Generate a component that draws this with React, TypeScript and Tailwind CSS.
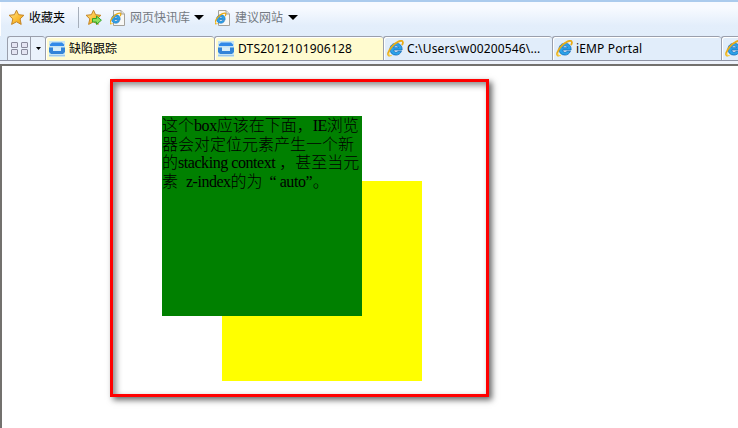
import type { ReactNode } from 'react';

function Star({ arrow = false }: { arrow?: boolean }) {
  return (
    <svg width="17" height="17" viewBox="0 0 17 17" className="shrink-0">
      <defs>
        <linearGradient id="gold" x1="0" y1="0" x2="1" y2="1">
          <stop offset="0" stopColor="#ffe9a0" />
          <stop offset="0.5" stopColor="#fcc23c" />
          <stop offset="1" stopColor="#f09a10" />
        </linearGradient>
      </defs>
      <path d="M8.5 1.2 L10.6 5.7 L15.9 6.3 L12.1 9.9 L13.2 15.4 L8.5 12.8 L3.6 15.4 L4.8 9.9 L1.1 6.3 L6.4 5.7 Z" fill="url(#gold)" stroke="#c48526" strokeWidth="1" strokeLinejoin="round" />
      {arrow && <path d="M7.5 9.5 H11.5 V7 L16.4 11.2 L11.5 15.4 V13 H7.5 Z" fill="#8ee05c" stroke="#35a32b" strokeWidth="1" />}
    </svg>
  );
}

function ELogo() {
  return (
    <>
      <path d="M13.6 10.6 C12.5 13 10.7 14.2 8.4 14.2 C4.9 14.2 2.8 11.8 2.8 8.7 C2.8 5.5 5.1 3.1 8.6 3.1 C12.5 3.1 14.5 5.9 14.2 9.4 H6.3 C6.5 11 7.4 11.6 8.6 11.6 C9.4 11.6 10 11.2 10.3 10.6 Z M6.4 7.3 H10.8 C10.5 6.1 9.8 5.5 8.6 5.5 C7.4 5.5 6.6 6.1 6.4 7.3 Z" fill="#2ba3ea" fillRule="evenodd" stroke="#1266b4" strokeWidth=".7" />
      <path d="M2.5 15 C-.3 14.6 1.2 10.2 4.4 6.4 C8.3 2 13.7 -.6 14.8 1.5 C15.3 2.4 14.7 3.8 14.1 4.8" fill="none" stroke="#e9ac18" strokeWidth="1.7" />
      <path d="M4.4 14.4 C2.3 15.3 1.3 14.4 1.8 12.5" fill="none" stroke="#f8cf42" strokeWidth="1.2" />
    </>
  );
}

function IeIcon() {
  return <svg width="17" height="17" viewBox="0 0 16 16" className="shrink-0"><ELogo /></svg>;
}

function PageIcon() {
  return (
    <svg width="16" height="16" viewBox="0 0 16 16" className="shrink-0">
      <path d="M3.5 .5 H11 L14.5 4 V15.5 H3.5 Z" fill="#f8f8f6" stroke="#a5a29b" />
      <path d="M11 .5 V4 H14.5" fill="#e2e1db" stroke="#a5a29b" />
      <g transform="translate(-.6 2.5) scale(.76)"><ELogo /></g>
    </svg>
  );
}

function TrackerIcon() {
  return (
    <svg width="16" height="16" viewBox="0 0 16 16" className="shrink-0">
      <rect width="16" height="16" fill="#c9e5f3" />
      <rect y="14" width="16" height="1" fill="#9cc8e8" />
      <path d="M3 1.5 H13 L15 3.5 V5 H1 V3.5 Z" fill="#3189e8" />
      <path d="M0 6.5 H4 V10 H12 V6.5 H16 V11 L14 13 H2 L0 11 Z" fill="#3384d8" />
      <rect x="4" y="6.5" width="8" height="3.5" fill="#d9eef8" />
    </svg>
  );
}

function Caret({ className, small = false }: { className?: string; small?: boolean }) {
  return small ? (
    <svg width="5" height="3" viewBox="0 0 5 3" className={className}><path d="M0 0 H5 L2.5 3 Z" fill="#000" /></svg>
  ) : (
    <svg width="10" height="5" viewBox="0 0 10 5" className={className}><path d="M0 0 H10 L5 5 Z" fill="#000" /></svg>
  );
}

function Tab({ icon, yellow = false, children }: { icon: ReactNode; yellow?: boolean; children?: ReactNode }) {
  return (
    <div className={`flex h-6 w-[169px] shrink-0 items-center overflow-hidden rounded-t-[3px] border-t border-l border-[#9a9fac] pl-[3px] whitespace-nowrap shadow-[inset_1px_1px_0_#fff] ${yellow ? 'bg-[#fffbcf]' : 'bg-[#e1edfa]'}`}>
      {icon}
      {children}
    </div>
  );
}

export default function App() {
  return (
    <div className="h-[428px] w-[738px] overflow-hidden bg-white text-black">
      <div className="h-[61px] border-t-2 border-[#abcbed] bg-linear-to-b from-[#f7faff] from-10% via-[#e3eefb] via-40% to-[#dfecfa] font-['Noto_Sans','Noto_Sans_CJK_SC',sans-serif] text-[12px] leading-4">
        <div className="flex h-[34px] items-center border-l border-white pb-[3px] pl-[7px] font-['Noto_Sans_CJK_SC',sans-serif] whitespace-nowrap">
          <Star />
          <span className="ml-[4px] w-[36px] pb-[2px]">收藏夹</span>
          <div className="ml-[13px] h-[21px] w-px bg-[#a6afbb]" />
          <span className="ml-[6px] flex"><Star arrow /></span>
          <span className="ml-[8px] flex"><PageIcon /></span>
          <span className="ml-[4px] w-[60px] pb-[2px] text-[#747a82]">网页快讯库</span>
          <Caret className="ml-[4px]" />
          <span className="ml-[11px] flex"><PageIcon /></span>
          <span className="ml-[4px] w-[48px] pb-[2px] text-[#747a82]">建议网站</span>
          <Caret className="ml-[5px]" />
        </div>
        <div className="flex h-[25px] border-b border-[#8f94a5] pl-[7px]">
          <div className="flex h-6 w-[38px] shrink-0 rounded-t-[3px] border-t border-l border-[#9a9fac] bg-[#eaf2fc]">
            <div className="grid w-[22px] grid-cols-2 content-center gap-x-px gap-y-px pl-[3px]">
              {[0, 1, 2, 3].map((i) => <div key={i} className="h-[6px] w-[7px] rounded-[1px] border border-[#898b9c] bg-[#e3e4f2]" />)}
            </div>
            <div className="flex flex-1 items-center justify-center border-l border-[#9a9fac]"><Caret small /></div>
          </div>
          <Tab yellow icon={<TrackerIcon />}><span className="ml-1">缺陷跟踪</span></Tab>
          <Tab yellow icon={<TrackerIcon />}><span className="ml-[4px] tracking-[0.2px]">DTS2012101906128</span></Tab>
          <Tab icon={<IeIcon />}><span className="ml-[3px] tracking-[0.15px]">C:\Users\w00200546\...</span></Tab>
          <Tab icon={<IeIcon />}><span className="ml-[3px] tracking-[0.15px]">iEMP Portal</span></Tab>
          <Tab icon={<IeIcon />} />
        </div>
      </div>
      <div className="h-[3px] bg-[#edf2fb]" />
      <div className="h-[364px] border-t-2 border-l-2 border-[#73716e] pt-[13px] pl-[108px]">
        <div className="h-[318px] w-[379px] border-[3px] border-[#ff0000] pt-[34px] pl-[49px] shadow-[3px_3px_6px_#666,inset_3px_3px_6px_#888]">
          <div className="relative z-10 h-[200px] w-[200px] bg-[#008000] pt-[1px] font-['Liberation_Serif','Noto_Sans_CJK_SC',serif] text-[16px] leading-[18.6px] font-light whitespace-pre">
            <div>这个<span className="tracking-[-0.4px]">box</span>应该在下面，<span className="tracking-[-0.6px]">IE</span>浏览</div>
            <div>器会对定位元素产生一个新</div>
            <div>的<span className="tracking-[-0.45px]">stacking context</span> ，甚至当元</div>
            <div>素  <span className="tracking-[-0.5px]">z-index</span>的为<span className="ml-[7px] mr-[3px]">“</span><span className="tracking-[-0.4px]">auto</span>”。</div>
          </div>
          <div className="mt-[-135px] ml-[60px] h-[200px] w-[200px] bg-[#ffff00]" />
        </div>
      </div>
    </div>
  );
}
